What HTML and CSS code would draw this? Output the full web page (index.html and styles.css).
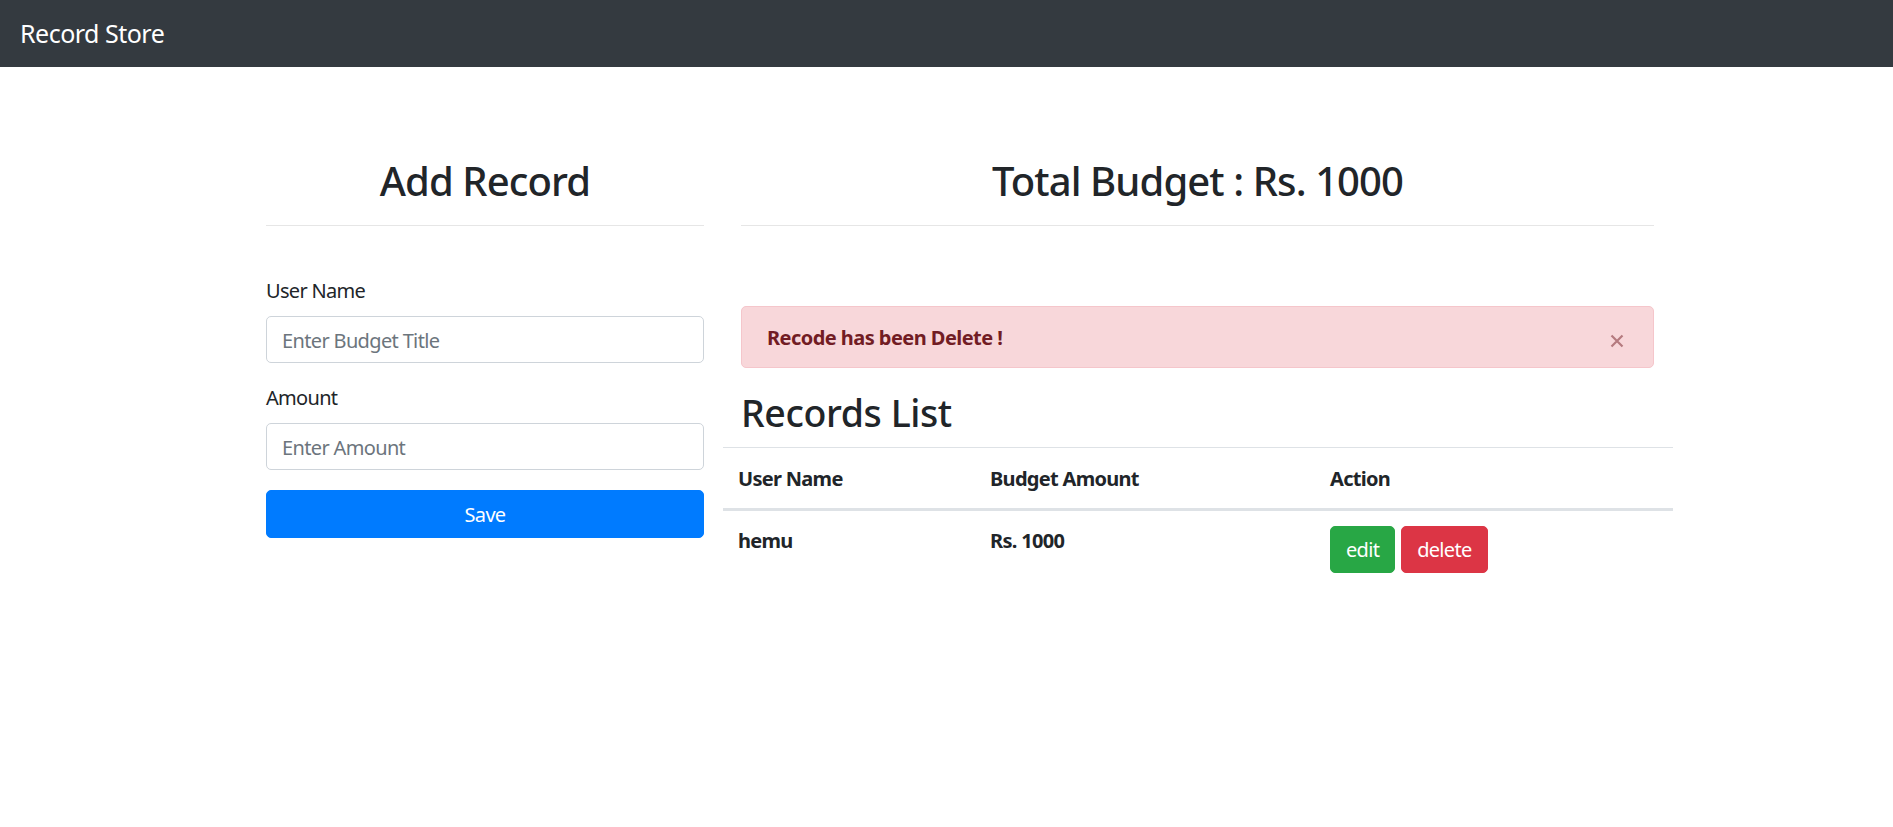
FILE: index.html
```html
<!DOCTYPE html>
<html lang="en">
<head>
<meta charset="utf-8">
<title>Record Store</title>
<link rel="stylesheet" href="styles.css">
</head>
<body>
<nav class="navbar">
  <span class="brand">Record Store</span>
</nav>
<main class="content">
  <section class="col-left">
    <h2 class="title center">Add Record</h2>
    <hr class="rule">
    <form class="form">
      <div class="group">
        <label class="label">User Name</label>
        <input class="input" type="text" placeholder="Enter Budget Title">
      </div>
      <div class="group">
        <label class="label">Amount</label>
        <input class="input" type="text" placeholder="Enter Amount">
      </div>
      <button type="button" class="btn btn-primary btn-block">Save</button>
    </form>
  </section>
  <section class="col-right">
    <h2 class="title center">Total Budget : Rs. 1000</h2>
    <hr class="rule">
    <div class="alert">
      <strong>Recode has been Delete !</strong>
      <span class="close" aria-label="Close">
        <svg width="14" height="14" viewBox="0 0 14 14"><path d="M1.5 1.5 L12.5 12.5 M12.5 1.5 L1.5 12.5" stroke="currentColor" stroke-width="2.2" fill="none"/></svg>
      </span>
    </div>
    <h2 class="list-title">Records List</h2>
    <table class="table">
      <thead>
        <tr>
          <th class="c1">User Name</th>
          <th class="c2">Budget Amount</th>
          <th class="c3">Action</th>
        </tr>
      </thead>
      <tbody>
        <tr>
          <td class="strong">hemu</td>
          <td class="strong">Rs. 1000</td>
          <td>
            <div class="actions">
              <button type="button" class="btn btn-success">edit</button>
              <button type="button" class="btn btn-danger">delete</button>
            </div>
          </td>
        </tr>
      </tbody>
    </table>
  </section>
</main>
</body>
</html>
```

FILE: styles.css
```css
* { box-sizing: border-box; }
html, body {
  margin: 0;
  padding: 0;
  background: #fff;
  color: #212529;
  font-family: "Noto Sans", "Open Sans", Arial, sans-serif;
  font-size: 20px;
  line-height: 30px;
  letter-spacing: -0.7px;
}
.navbar {
  height: 67px;
  background: #343a40;
  display: flex;
  align-items: center;
  padding: 0 20px;
}
.brand {
  color: #fff;
  font-size: 25px;
  line-height: 36px;
  margin-top: -1px;
  letter-spacing: -0.5px;
}
.content {
  display: flex;
  align-items: flex-start;
  gap: 37px;
  padding: 90px 0 0 266px;
}
.col-left { width: 438px; }
.col-right { width: 913px; }
.title {
  margin: 0;
  font-size: 40px;
  line-height: 48px;
  font-weight: 500;
  letter-spacing: -0.9px;
}
.center { text-align: center; }
.rule {
  margin: 20px 0 0;
  border: 0;
  border-top: 1px solid #e6e6e6;
  height: 0;
}
.form { margin-top: 50px; }
.group { margin-bottom: 20px; }
.label {
  display: block;
  margin-bottom: 10px;
  font-size: 20px;
  line-height: 30px;
  padding-top: 1px;
  margin-top: -1px;
}
.input {
  display: block;
  width: 100%;
  height: 47px;
  padding: 1px 15px 0;
  border: 1px solid #ced4da;
  border-radius: 5px;
  font-family: inherit;
  font-size: 20px;
  letter-spacing: -0.65px;
  color: #495057;
  background: #fff;
}
.input::placeholder { color: #6c757d; }
.btn {
  display: inline-block;
  height: 47px;
  padding: 1px 15px 0;
  border: 1px solid transparent;
  border-radius: 5px;
  font-family: inherit;
  font-size: 20px;
  letter-spacing: -0.7px;
  line-height: 44px;
  color: #fff;
  cursor: pointer;
}
.btn-block { display: block; width: 100%; height: 48px; }
.btn-primary { background: #007bff; border-color: #007bff; }
.btn-success { background: #28a745; border-color: #28a745; }
.btn-danger { background: #dc3545; border-color: #dc3545; }
.alert {
  position: relative;
  margin-top: 80px;
  margin-bottom: 20px;
  height: 62px;
  padding: 16px 25px 14px;
  border: 1px solid #f5c6cb;
  border-radius: 5px;
  background: #f8d7da;
  color: #721c24;
  font-size: 20px;
  line-height: 30px;
  letter-spacing: -0.55px;
}
.alert strong { font-weight: 700; }
.close {
  position: absolute;
  top: 27px;
  right: 29px;
  width: 14px;
  height: 14px;
  color: #b57a7f;
  display: block;
  line-height: 0;
}
.list-title {
  margin: 0 0 11px;
  font-size: 37.5px;
  line-height: 48px;
  font-weight: 500;
  letter-spacing: -0.4px;
  padding-top: 1px;
  height: 48px;
}
.table {
  width: 950px;
  margin-left: -18px;
  border-collapse: collapse;
}
.table th, .table td {
  padding: 15px;
  text-align: left;
  vertical-align: top;
  font-size: 20px;
  line-height: 30px;
}
.table thead th {
  border-top: 1px solid #dee2e6;
  border-bottom: 3px solid #dee2e6;
  font-weight: 700;
  padding-top: 16px;
  padding-bottom: 14px;
}
.c1 { width: 252px; }
.c2 { width: 340px; }
.strong { font-weight: 700; padding-top: 16px; }
.actions { display: flex; gap: 6px; }
```
